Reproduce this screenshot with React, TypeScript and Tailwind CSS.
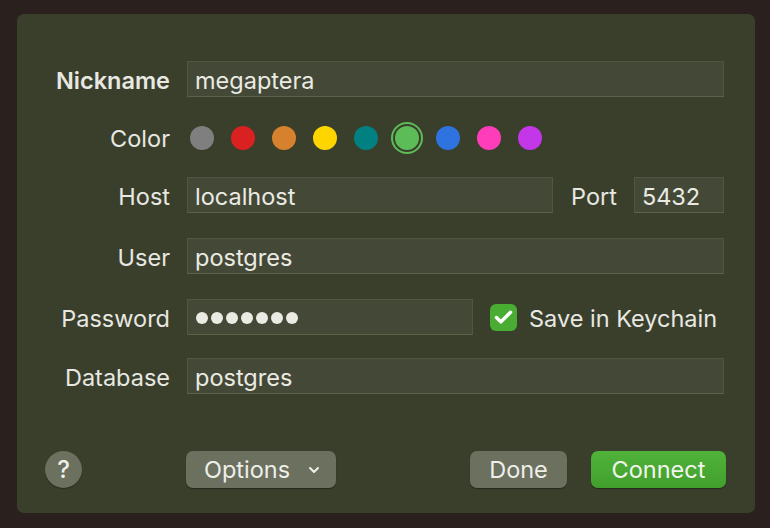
import { ChevronDown, Check } from "lucide-react";

const colors = [
  "#7f7f7f",
  "#da2121",
  "#d6812d",
  "#ffd500",
  "#008080",
  "#5cbd58",
  "#2f73e1",
  "#ff3cb9",
  "#c337e8",
];

const Field = ({ value, className = "" }: { value: React.ReactNode; className?: string }) => (
  <div
    className={`h-[36px] flex items-center px-[7px] pt-[3px] leading-[28px] bg-[#444937] border border-[#515640] border-b-[#5c6149] text-[23.5px] text-[#ebebe4] ${className}`}
  >
    {value}
  </div>
);

const Label = ({ children, bold }: { children: string; bold?: boolean }) => (
  <div
    className={`w-[170px] h-[36px] shrink-0 pr-[17px] pt-[3px] leading-[28px] flex items-center justify-end text-[23.5px] text-[#e8e8e2] ${bold ? "font-semibold" : ""}`}
  >
    {children}
  </div>
);

export default function App() {
  return (
    <div
      className="w-[770px] h-[528px] bg-[#2a201e] pt-[14px] pl-[17px]"
      style={{ fontFamily: "Inter, 'Noto Sans', sans-serif" }}
    >
      <div className="w-[738px] h-[499px] rounded-[7px] bg-[#3a3f2c] flex flex-col pr-[31px]">
        <div className="flex items-center mt-[47px]">
          <Label bold>Nickname</Label>
          <Field value="megaptera" className="flex-1" />
        </div>

        <div className="flex items-center mt-[22px] h-[36px]">
          <Label>Color</Label>
          <div className="flex items-center gap-[17px] ml-[3px] mt-[1px]">
            {colors.map((c, i) =>
              i === 5 ? (
                <div
                  key={c}
                  className="w-[32px] h-[32px] -mx-[4px] rounded-full border-2 border-[#5cbd58] flex items-center justify-center"
                >
                  <div className="w-[24px] h-[24px] rounded-full" style={{ backgroundColor: c }} />
                </div>
              ) : (
                <div key={c} className="w-[24px] h-[24px] rounded-full" style={{ backgroundColor: c }} />
              )
            )}
          </div>
        </div>

        <div className="flex items-center mt-[22px]">
          <Label>Host</Label>
          <Field value="localhost" className="w-[366px]" />
          <div className="ml-[18px] mr-[17px] pt-[3px] leading-[28px] text-[23.5px] text-[#e8e8e2]">Port</div>
          <Field value="5432" className="flex-1" />
        </div>

        <div className="flex items-center mt-[25px]">
          <Label>User</Label>
          <Field value="postgres" className="flex-1" />
        </div>

        <div className="flex items-center mt-[25px]">
          <Label>Password</Label>
          <Field
            value={
              <div className="flex gap-[3px] pl-[1px] -mt-[1px]">
                {Array.from({ length: 7 }).map((_, i) => (
                  <div key={i} className="w-[12px] h-[12px] rounded-full bg-[#ebebe4]" />
                ))}
              </div>
            }
            className="w-[286px]"
          />
          <div className="ml-[17px] mt-[1px] w-[27px] h-[27px] rounded-[6px] bg-[#4aad33] flex items-center justify-center">
            <Check className="w-[21px] h-[21px] text-white" strokeWidth={4} />
          </div>
          <div className="ml-[12px] pt-[3px] leading-[28px] text-[23.5px] text-[#e8e8e2]">Save in Keychain</div>
        </div>

        <div className="flex items-center mt-[23px]">
          <Label>Database</Label>
          <Field value="postgres" className="flex-1" />
        </div>

        <div className="flex items-center mt-auto mb-[25px] pl-[28px] -mr-[2px]">
          <div className="w-[37px] h-[37px] rounded-full bg-[#6b705f] flex items-center justify-center text-[24px] text-[#f0f0ea] font-medium shadow-[0_1px_1px_rgba(0,0,0,0.35)]">
            ?
          </div>
          <button className="ml-[104px] w-[150px] h-[37px] rounded-[7px] bg-[#6b705f] flex items-center justify-center gap-[16px] text-[23.5px] text-[#efefe9] shadow-[0_1px_1px_rgba(0,0,0,0.35)]">
            <span className="ml-[4px]">Options</span>
            <ChevronDown className="w-[16px] h-[16px]" strokeWidth={3} />
          </button>
          <button className="ml-auto w-[97px] h-[37px] rounded-[7px] bg-[#6b705f] text-[23.5px] text-[#efefe9] shadow-[0_1px_1px_rgba(0,0,0,0.35)]">
            Done
          </button>
          <button className="ml-[24px] w-[135px] h-[37px] rounded-[7px] bg-gradient-to-b from-[#4fb23a] to-[#41a02c] text-[23.5px] text-[#f4f4ee] shadow-[0_1px_1px_rgba(0,0,0,0.35)]">
            Connect
          </button>
        </div>
      </div>
    </div>
  );
}
